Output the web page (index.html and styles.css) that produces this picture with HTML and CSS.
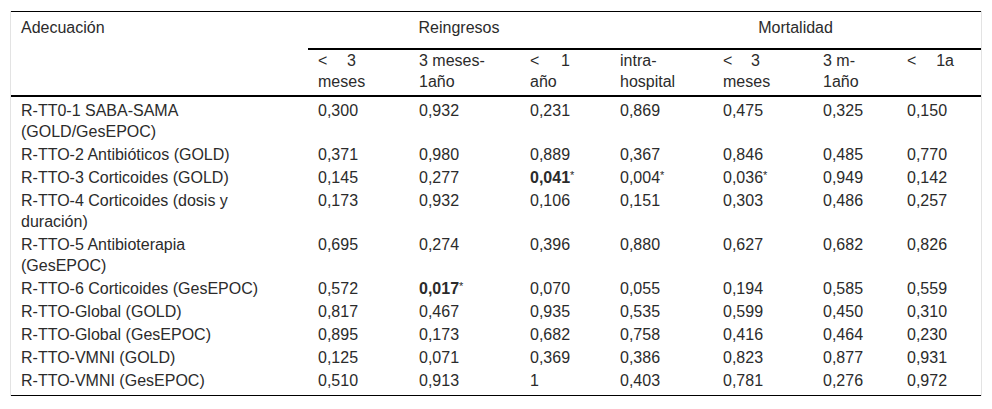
FILE: index.html
```html
<!DOCTYPE html>
<html lang="es">
<head>
<meta charset="utf-8">
<title>Adecuación</title>
<link rel="stylesheet" href="styles.css">
</head>
<body>
<div class="wrap">
<table class="t">
<colgroup>
<col class="w1"><col class="w2"><col class="w3"><col class="w4"><col class="w5"><col class="w6"><col class="w7"><col class="w8">
</colgroup>
<thead>
<tr class="ha">
<th rowspan="2" class="c1 hfirst">Adecuación</th>
<th colspan="3" class="grp">Reingresos</th>
<th colspan="4" class="grp">Mortalidad</th>
</tr>
<tr class="hb">
<th><span class="j j2">&lt; 3</span>meses</th>
<th>3 meses-<br>1año</th>
<th><span class="j j4">&lt; 1</span>año</th>
<th>intra-<br>hospital</th>
<th><span class="j j6">&lt; 3</span>meses</th>
<th>3 m-<br>1año</th>
<th><span class="j j8">&lt; 1a</span></th>
</tr>
</thead>
<tbody>
<tr class="first"><td class="c1">R-TT0-1 SABA-SAMA<br>(GOLD/GesEPOC)</td><td>0,300</td><td>0,932</td><td>0,231</td><td>0,869</td><td>0,475</td><td>0,325</td><td>0,150</td></tr>
<tr><td class="c1">R-TTO-2 Antibióticos (GOLD)</td><td>0,371</td><td>0,980</td><td>0,889</td><td>0,367</td><td>0,846</td><td>0,485</td><td>0,770</td></tr>
<tr><td class="c1">R-TTO-3 Corticoides (GOLD)</td><td>0,145</td><td>0,277</td><td><b>0,041</b><sup class="ast">*</sup></td><td>0,004<sup class="ast">*</sup></td><td>0,036<sup class="ast">*</sup></td><td>0,949</td><td>0,142</td></tr>
<tr><td class="c1">R-TTO-4 Corticoides (dosis y<br>duración)</td><td>0,173</td><td>0,932</td><td>0,106</td><td>0,151</td><td>0,303</td><td>0,486</td><td>0,257</td></tr>
<tr><td class="c1">R-TTO-5 Antibioterapia<br>(GesEPOC)</td><td>0,695</td><td>0,274</td><td>0,396</td><td>0,880</td><td>0,627</td><td>0,682</td><td>0,826</td></tr>
<tr><td class="c1">R-TTO-6 Corticoides (GesEPOC)</td><td>0,572</td><td><b>0,017</b><sup class="ast">*</sup></td><td>0,070</td><td>0,055</td><td>0,194</td><td>0,585</td><td>0,559</td></tr>
<tr><td class="c1">R-TTO-Global (GOLD)</td><td>0,817</td><td>0,467</td><td>0,935</td><td>0,535</td><td>0,599</td><td>0,450</td><td>0,310</td></tr>
<tr><td class="c1">R-TTO-Global (GesEPOC)</td><td>0,895</td><td>0,173</td><td>0,682</td><td>0,758</td><td>0,416</td><td>0,464</td><td>0,230</td></tr>
<tr><td class="c1">R-TTO-VMNI (GOLD)</td><td>0,125</td><td>0,071</td><td>0,369</td><td>0,386</td><td>0,823</td><td>0,877</td><td>0,931</td></tr>
<tr class="last"><td class="c1">R-TTO-VMNI (GesEPOC)</td><td>0,510</td><td>0,913</td><td>1</td><td>0,403</td><td>0,781</td><td>0,276</td><td>0,972</td></tr>
</tbody>
</table>
</div>
</body>
</html>
```

FILE: styles.css
```css
html, body {
  margin: 0;
  padding: 0;
  background: #ffffff;
}

body {
  padding: 11px 10px 0 10px;
  font-family: "Liberation Sans", Arial, Helvetica, sans-serif;
  font-size: 16px;
  line-height: 21px;
  color: #2b2b2b;
}

.wrap {
  width: 972px;
  box-sizing: border-box;
  border-left: 1px solid #e3e3e3;
  border-right: 1px solid #e3e3e3;
}

.t {
  width: 100%;
  border-collapse: separate;
  border-spacing: 0;
  table-layout: fixed;
  border-top: 1px solid #000;
  border-bottom: 1px solid #000;
}

.w1 { width: 297px; }
.w2 { width: 101px; }
.w3 { width: 111px; }
.w4 { width: 90px; }
.w5 { width: 103px; }
.w6 { width: 100px; }
.w7 { width: 84px; }
.w8 { width: 84px; }

th, td {
  text-align: left;
  vertical-align: top;
  font-weight: normal;
  padding: 1px 10px 1px 10px;
}

.c1 {
  padding-left: 10px;
}

.ha th {
  padding-top: 5px;
  padding-bottom: 10px;
}

.ha .grp {
  text-align: center;
  border-bottom: 2px solid #000;
}

.hb th {
  padding-top: 0px;
  padding-bottom: 3px;
  border-bottom: 2px solid #000;
}

.ha .hfirst {
  border-bottom: 2px solid #000;
}

.j {
  display: block;
  text-align: justify;
  text-align-last: justify;
}

.j2 { width: 38px; }
.j4 { width: 40px; }
.j6 { width: 37px; }
.j8 { width: 47px; }

.first td {
  padding-top: 3px;
}

.last td {
  padding-bottom: 4px;
}

b {
  font-weight: bold;
}

.ast {
  font-size: 11px;
  line-height: 0;
  vertical-align: 4px;
}
```
